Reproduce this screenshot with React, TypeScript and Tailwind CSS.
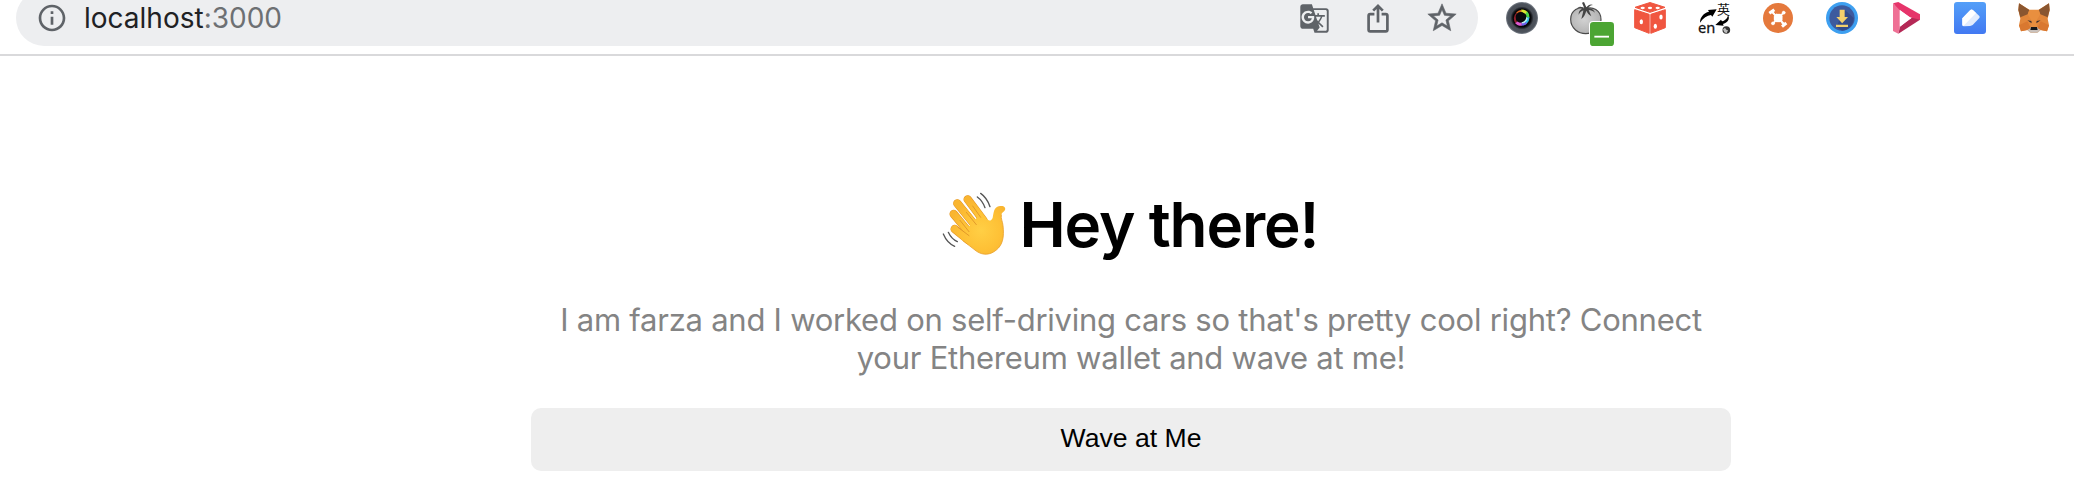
import type { ReactNode } from "react";
import { MdGTranslate, MdInfoOutline } from "react-icons/md";

function ShareIcon() {
  return (
    <svg viewBox="0 0 32 32" className="size-8" fill="none" stroke="#5f6368" strokeWidth="2.7">
      <path d="M12.4 12.2H8.2a1.6 1.6 0 0 0-1.6 1.6v14a1.6 1.6 0 0 0 1.6 1.6h15.6a1.6 1.6 0 0 0 1.6-1.6v-14a1.6 1.6 0 0 0-1.6-1.6h-4.2" />
      <path d="M16 20.500V4.500M11.200 8.600 16 3.800 20.800 8.600" />
    </svg>
  );
}

function StarIcon() {
  return (
    <svg viewBox="0 0 24 24" className="size-[34px] shrink-0" fill="currentColor" stroke="currentColor" strokeWidth="0.4">
      <path d="m22 9.240-7.190-.620L12 2 9.190 8.630 2 9.240l5.460 4.730L5.820 21 12 17.270 18.180 21l-1.630-7.030L22 9.240zM12 15.400l-3.760 2.270 1-4.280-3.320-2.880 4.380-.380L12 6.100l1.710 4.040 4.380.380-3.320 2.880 1 4.280L12 15.400z" />
    </svg>
  );
}

function Ext({ children }: { children: ReactNode }) {
  return (
    <svg viewBox="0 0 96 96" className="size-8 shrink-0 overflow-visible">
      {children}
    </svg>
  );
}

function LensIcon() {
  return (
    <Ext>
      <defs>
        <radialGradient id="rim">
          <stop offset="0.5" stopColor="#0c0d10" />
          <stop offset="0.62" stopColor="#1d2026" />
          <stop offset="0.72" stopColor="#4a4f57" />
          <stop offset="0.9" stopColor="#4d535c" />
          <stop offset="1" stopColor="#7d838c" />
        </radialGradient>
      </defs>
      <circle cx="48" cy="48" r="48" fill="url(#rim)" />
      <circle cx="48" cy="48" r="28" fill="#060709" />
      <g fill="none" strokeWidth="9">
        <path d="M31 62C25 53 26 42 33 34" stroke="#8f1f2b" strokeWidth="6" />
        <path d="M33 34c4-4 9-6 14-7" stroke="#d8661f" strokeWidth="7" />
        <path d="M46 27c7 0 12 2 16 7" stroke="#d9e52f" />
        <path d="M61 32c4 4 5 9 5 15" stroke="#4ed646" />
        <path d="M66 46c0 7-3 12-7 16" stroke="#2fb9e6" />
        <path d="M60 61c-4 4-8 6-14 6" stroke="#6f62ec" />
        <path d="M47 67c-6 0-12-1-16-6" stroke="#e05bd0" />
      </g>
      <circle cx="44" cy="45" r="15" fill="#08090c" />
      <path d="M47 61c8-2 13-8 14-16l4 4c-1 8-8 15-18 15z" fill="#bff3ee" />
    </Ext>
  );
}

function TomatoIcon() {
  return (
    <Ext>
      <defs>
        <radialGradient id="tomato" cx="45%" cy="45%" r="60%">
          <stop offset="0" stopColor="#d2d2d2" />
          <stop offset="1" stopColor="#b0b0b0" />
        </radialGradient>
      </defs>
      <path d="M47 20C27 12 2 24 2 52c0 28 24 43 45 43s46-15 46-42c0-30-26-40-46-33z" fill="url(#tomato)" stroke="#4a4a4a" strokeWidth="3.5" />
      <path d="M43 19 36 2l6-2 7 16c6-8 14-11 20-7-7 0-11 4-14 9 9 1 17 5 20 14-6-5-12-8-19-8l8 19c-8-5-12-11-15-17-3 9-6 18-15 25 2-9 5-17 6-26-6 2-10 6-14 13-1-9 4-15 10-18-4-2-9-3-15-2 8-6 16-5 20 2z" fill="#444" />
      <rect x="57" y="57" width="77" height="77" rx="12" fill="#fff" />
      <rect x="60" y="60" width="72" height="72" rx="10" fill="#4ca533" />
      <path d="M73 104h44" stroke="#fff" strokeWidth="5.5" />
    </Ext>
  );
}

function DiceIcon() {
  return (
    <Ext>
      <g fill="#f05640" stroke="#f05640" strokeWidth="3" strokeLinejoin="round">
        <path d="M48 1.500 93 16 48 31 3 16z" />
        <path d="M2 23 45.500 37v57L2 77z" />
        <path d="M94 23 50.500 37v57L94 77z" />
      </g>
      <g fill="#fff">
        <ellipse cx="26" cy="18" rx="6.500" ry="3.500" />
        <ellipse cx="48" cy="18" rx="6.500" ry="3.500" />
        <ellipse cx="71" cy="18" rx="6.500" ry="3.500" />
        <ellipse cx="22" cy="59" rx="5" ry="7.500" />
        <ellipse cx="81" cy="45" rx="5" ry="7.500" />
        <ellipse cx="64" cy="73" rx="5" ry="7.500" />
      </g>
    </Ext>
  );
}

function LanguageIcon() {
  return (
    <Ext>
      <text x="57" y="35" fontSize="39" fill="#111" className="font-['Noto_Sans_CJK_SC',sans-serif]">英</text>
      <text x="0" y="94" fontSize="44" fill="#111" stroke="#111" strokeWidth="0.8" className="font-['Noto_Sans',sans-serif]">en</text>
      <path d="M6 62C6 45 17 33 33 29l-3-5 26-2-13 22-4-5C27 41 16 48 6 62z" fill="#000" />
      <path d="M90 38c6 12 2 21-15 28l2 5-25-2 17-16 3 5c12-4 17-10 18-20z" fill="#000" />
      <circle cx="85" cy="84" r="11.500" fill="#333" />
      <path d="m75 82 6-5 4 6 5 2-4 9-7-3z" fill="#bbb" />
    </Ext>
  );
}

function HubIcon() {
  return (
    <Ext>
      <circle cx="48" cy="48" r="45" fill="#e5793c" />
      <g stroke="#fff" fill="#fff" strokeLinecap="round">
        <path d="M31 31 65 64M65 32 33 64" strokeWidth="5" />
        <rect x="36" y="36" width="25" height="24" rx="7" />
        <circle cx="65" cy="32" r="5" />
        <circle cx="33" cy="64" r="5" />
        <path d="M22 34 37 23M60 74 73 63" strokeWidth="9" strokeLinecap="butt" />
        <path d="m30 27 6 8M66 69l-6-7" strokeWidth="5" />
      </g>
    </Ext>
  );
}

function DownloadIcon() {
  return (
    <Ext>
      <circle cx="48" cy="48" r="48" fill="#3d9ff0" />
      <circle cx="48" cy="48" r="38" fill="#3d5a9e" />
      <path d="m56 23 27 25c0 20-15 37-35 38L31 74z" fill="#334a8a" />
      <path d="M41 23h15v22h10L48.500 64 31 45h10zM30 68h36v7H30z" fill="#f4cf6c" />
    </Ext>
  );
}

function PlayIcon() {
  return (
    <Ext>
      <path d="M9 5 30 17v56l-5 22-16-8z" fill="#ef7095" />
      <path d="M90 53 25 95l5-21 29-24 29-13z" fill="#b52956" />
      <path d="M9 4 25 0l65 37v16L59 46 29 24z" fill="#e6346a" />
      <path d="m29 24 35 25-35 25z" fill="#fff" />
    </Ext>
  );
}

function EditIcon() {
  return (
    <Ext>
      <defs>
        <linearGradient id="edit" x2="0" y2="1">
          <stop offset="0" stopColor="#549ff8" />
          <stop offset="1" stopColor="#4279f2" />
        </linearGradient>
      </defs>
      <rect width="96" height="96" rx="9" fill="url(#edit)" />
      <path d="M25 49 49 24q4-3 8 0l19 18q2 3 0 6L56 69q-3 2-8 3l-18 1q-5 0-5-5z" fill="#e2ecfd" />
      <path d="M25 49 49 24q4-3 7 0l10 9-38 39q-3-1-3-4z" fill="#fff" />
    </Ext>
  );
}

function FoxIcon() {
  return (
    <Ext>
      <path d="M3 4 34 23h28L93 4l2 20-6 26 4 20-6 18-19-4-11 8H39l-11-8-19 4L3 70l4-20L1 24z" fill="#e2863a" />
      <path d="M3 4 34 24 29 37 7 46 1 24zM93 4 62 24l5 13 22 9 6-22z" fill="#8a5630" />
      <path d="m34 24-5 13 12 19-3 22h20l-3-22 12-19-5-13z" fill="#e98f3f" />
      <path d="m3 70 25-12 10 20-10 6-19 4zM93 70 68 58 58 78l10 6 19 4z" fill="#d97830" />
      <path d="m28 55 12 2 1 7zM68 55l-12 2-1 7z" fill="#3b3030" />
      <path d="m28 84 10-6 2 14h-3zM68 84l-10-6-2 14h3z" fill="#cdbdb0" />
      <path d="M38 75h20l3 10-5 7H40l-5-7z" fill="#c9c2bd" />
      <path d="M39 75h18l2 9H37z" fill="#17181a" />
    </Ext>
  );
}

function WavingHand() {
  return (
    <svg viewBox="0 0 198 198" className="size-[66px] shrink-0 overflow-visible" fill="none" strokeLinecap="round">
      <defs>
        <radialGradient id="skin" gradientUnits="userSpaceOnUse" cx="120" cy="118" r="95">
          <stop offset="0" stopColor="#ffcf45" />
          <stop offset="0.6" stopColor="#fec136" />
          <stop offset="1" stopColor="#f9b530" />
        </radialGradient>
      </defs>
      <g stroke="#e29324" strokeWidth="25">
        <path d="m80 25 48 64" />
        <path d="m49 37 62 77" />
        <path d="m38 69 56 67" />
        <path d="m41 114 42 34" />
      </g>
      <g stroke="url(#skin)" strokeWidth="22">
        <path d="m80 25 48 64" />
        <path d="m49 37 62 77" />
        <path d="m38 69 56 67" />
        <path d="m41 114 42 34" />
      </g>
      <path
        d="M72 120 117 70l20 15c8 6 15 4 18-5 4-16 2-32 22-35 12-2 18 5 15 12-3 6-10 7-11 15-2 12 4 19 5 32 4 34-1 58-20 73-18 15-39 17-59 4l-47-37z"
        fill="url(#skin)"
      />
      <path d="m76 64 30 37M57 88l27 34M51 109l33 25M95 45l24 34" stroke="#dc9126" strokeWidth="2.500" />
      <path d="M181 72c-2 12 4 19 5 32 4 34-1 58-20 73-18 15-39 17-59 4l-40-31" stroke="#e9a02a" strokeWidth="2.500" />
      <g stroke="#555" strokeWidth="4">
        <path d="M119 7c13 9 22 22 28 40M109 18c11 8 18 18 23 32" />
        <path d="M22 124c6 13 15 23 27 28M7 129c7 17 18 30 34 37" />
      </g>
    </svg>
  );
}

export default function App() {
  return (
    <div className="h-[482px] w-full overflow-hidden bg-white font-[Inter,sans-serif]">
      <header className="flex h-14 items-start border-b-2 border-[#d9d9db] pl-4">
        <div className="-mt-2.5 flex h-14 w-[1462px] shrink-0 items-center rounded-full bg-[#edeef0] pr-5 pl-5">
          <MdInfoOutline className="size-8 shrink-0 text-[#5f6368]" />
          <div className="ml-4 flex-1 text-[28px] leading-8 text-[#202124]">
            localhost<span className="text-[#6d7073]">:3000</span>
          </div>
          <div className="flex items-center gap-8 text-[#5f6368]">
            <div className="flex size-8 items-center justify-center">
              <MdGTranslate className="size-[31px] shrink-0" />
            </div>
            <ShareIcon />
            <div className="flex size-8 items-center justify-center">
              <StarIcon />
            </div>
          </div>
        </div>
        <div className="mt-0.5 ml-7 flex gap-8">
          <LensIcon />
          <TomatoIcon />
          <DiceIcon />
          <LanguageIcon />
          <HubIcon />
          <DownloadIcon />
          <PlayIcon />
          <EditIcon />
          <FoxIcon />
        </div>
      </header>
      <main className="ml-[531px] flex w-[1200px] flex-col pt-[135px]">
        <h1 className="flex h-[68px] items-start pl-[410px] text-[62px] leading-[68px] font-semibold tracking-[-1.15px] text-black">
          <WavingHand />
          <span className="ml-[12.5px] whitespace-nowrap">Hey there!</span>
        </h1>
        <p className="mt-[42px] text-center text-[31px] leading-[38px] tracking-[-0.24px] text-[#848484]">
          I am farza and I worked on self-driving cars so that's pretty cool right? Connect
          <br />
          your Ethereum wallet and wave at me!
        </p>
        <button className="mt-[31px] h-[63px] rounded-[10px] bg-[#eeeeee] pb-px font-['Liberation_Sans',Arial,sans-serif] text-[26.6px] text-black">
          Wave at Me
        </button>
      </main>
    </div>
  );
}
